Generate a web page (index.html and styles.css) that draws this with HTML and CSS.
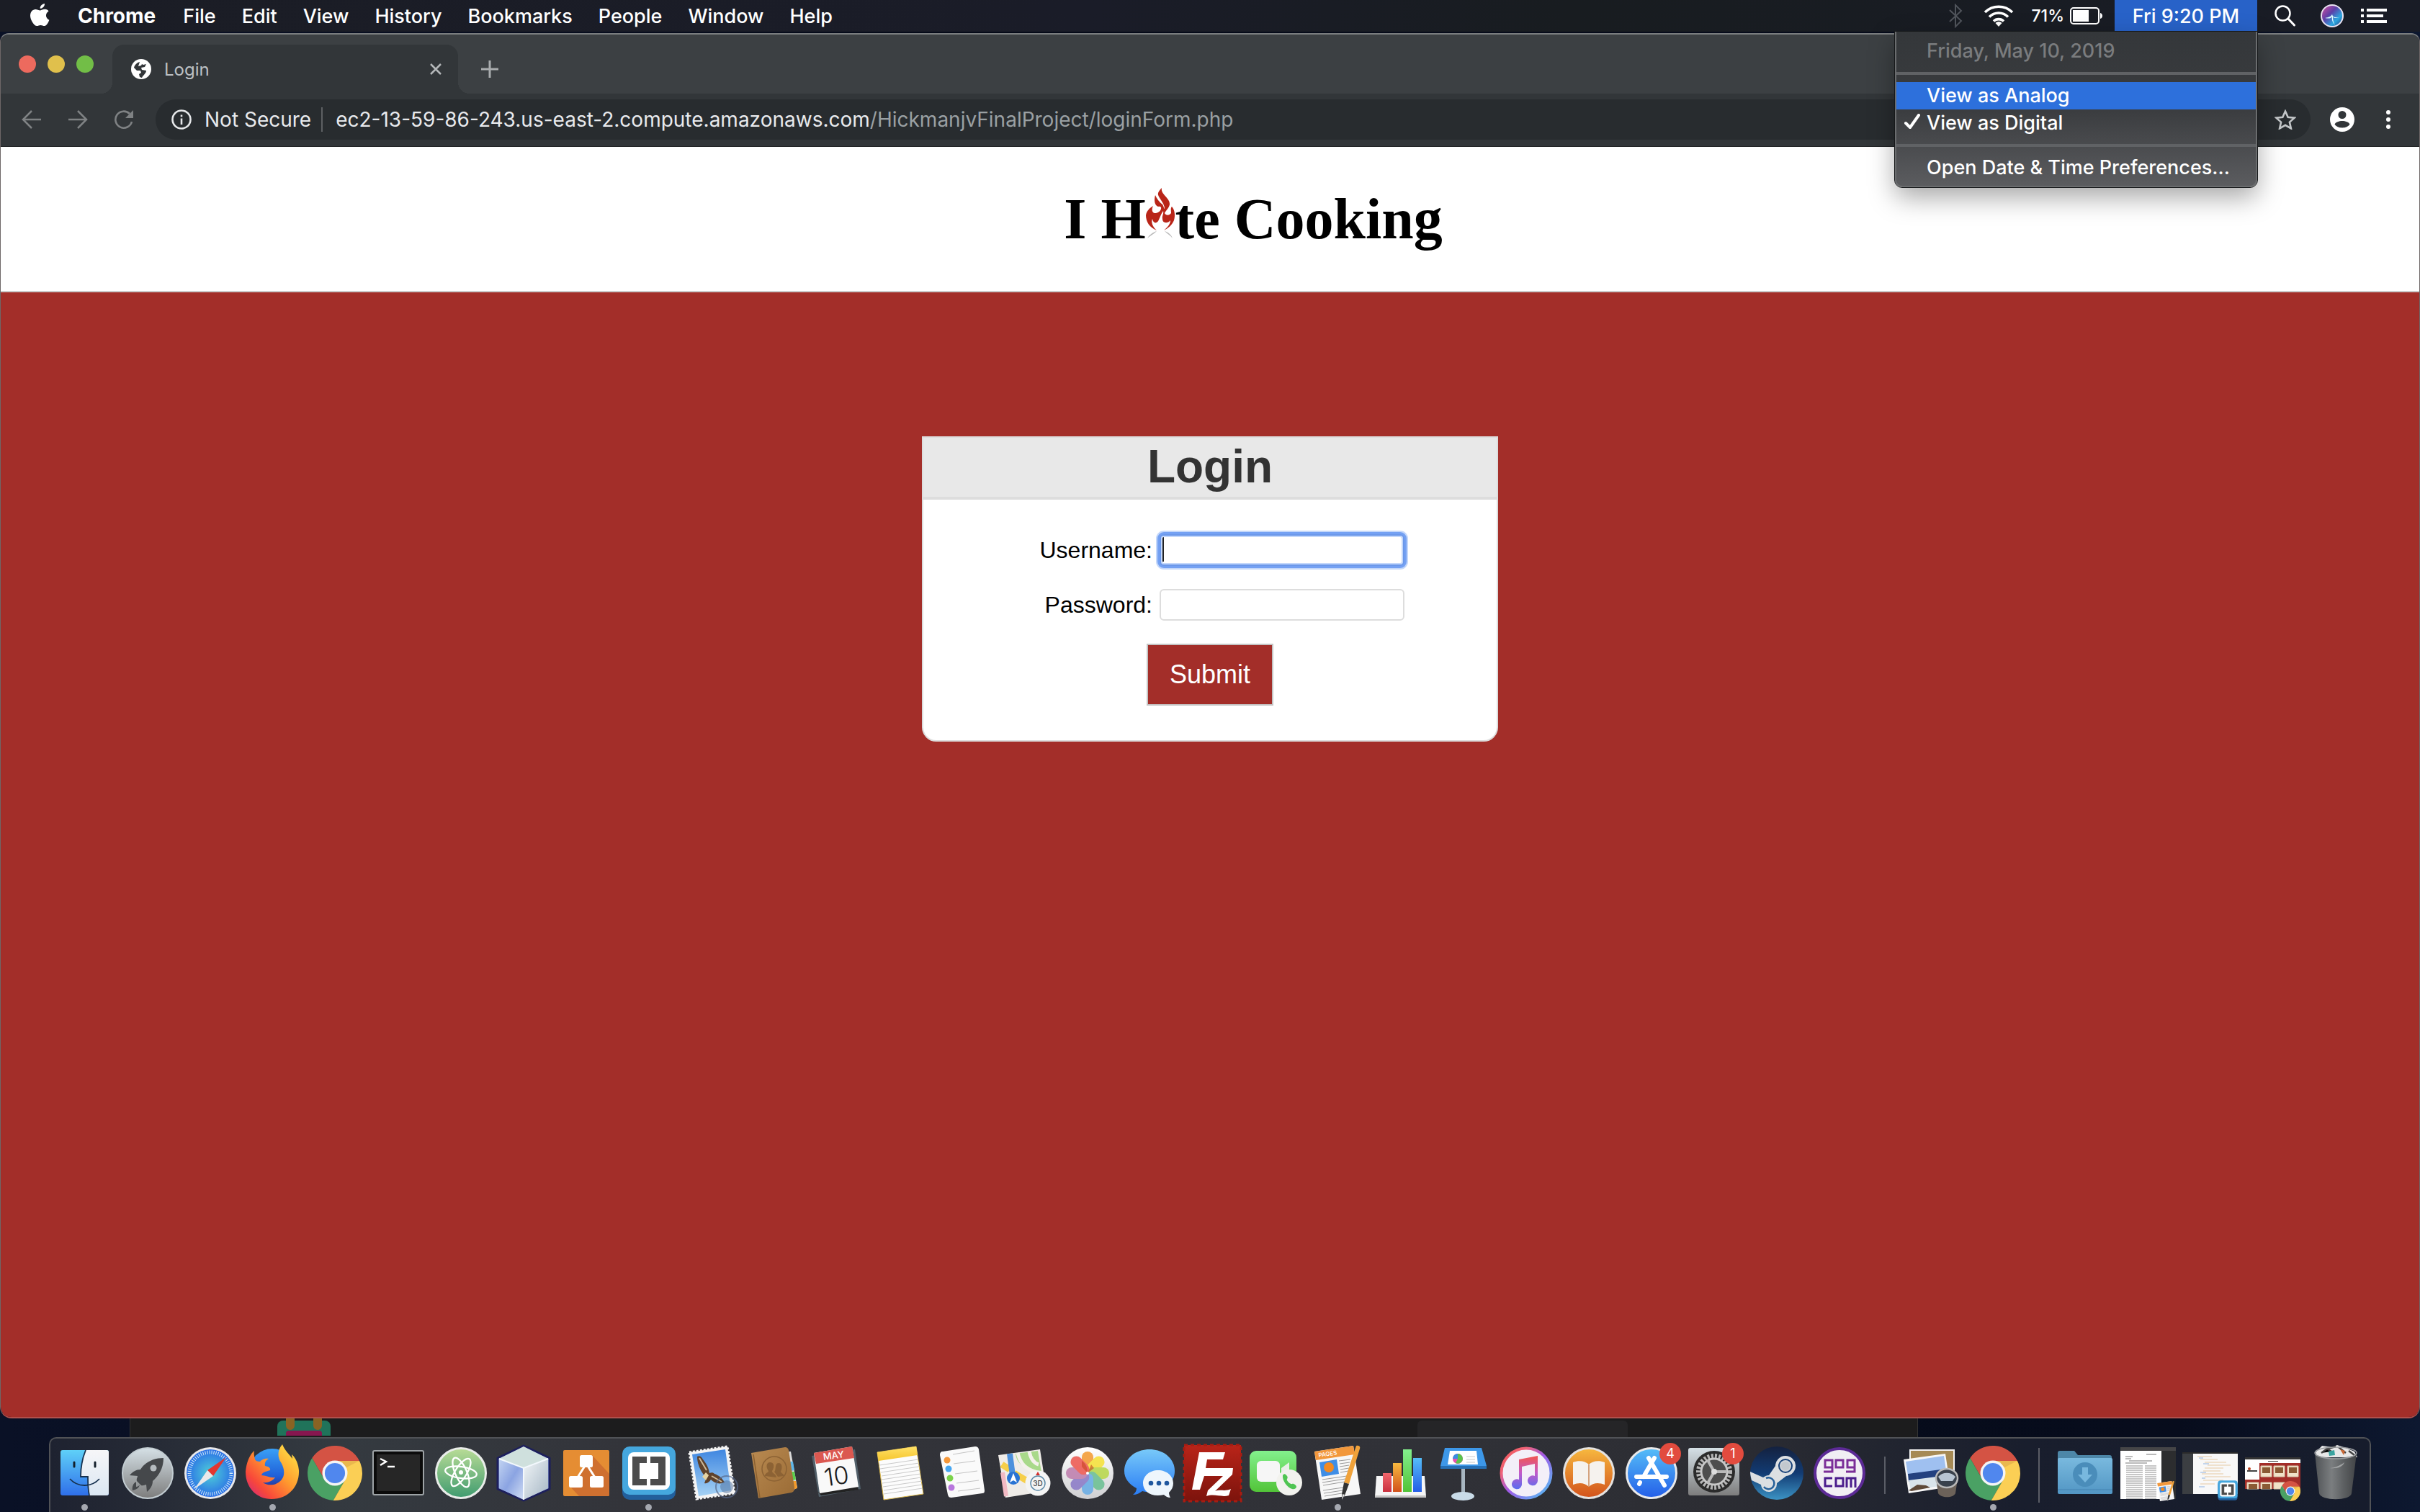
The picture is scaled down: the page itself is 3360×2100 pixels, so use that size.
FILE: index.html
```html
<!DOCTYPE html>
<html lang="en">
<head>
<meta charset="utf-8">
<title>Login</title>
<link rel="stylesheet" href="styles.css">
</head>
<body class="desktop">

<svg class="defs" width="0" height="0" aria-hidden="true">
  <defs>
    <linearGradient id="g-silver" x1="0" y1="0" x2="0" y2="1"><stop offset="0" stop-color="#d5e0e6"/><stop offset="1" stop-color="#7d7d7d"/></linearGradient>
    <linearGradient id="g-white" x1="0" y1="0" x2="0" y2="1"><stop offset="0" stop-color="#fff"/><stop offset="1" stop-color="#cfcfd2"/></linearGradient>
    <linearGradient id="g-finder" x1="0" y1="0" x2="0" y2="1"><stop offset="0" stop-color="#5fd0f8"/><stop offset="1" stop-color="#2f6fea"/></linearGradient>
    <linearGradient id="g-face" x1="0" y1="0" x2="0" y2="1"><stop offset="0" stop-color="#f6f6f8"/><stop offset="1" stop-color="#dbe7f3"/></linearGradient>
    <radialGradient id="g-safari"><stop offset="0" stop-color="#4fd0d8"/><stop offset="1" stop-color="#2a6fe6"/></radialGradient>
    <linearGradient id="g-fox" x1="1" y1="0" x2="0" y2="1"><stop offset="0" stop-color="#fff04a"/><stop offset=".45" stop-color="#ff9a2e"/><stop offset=".75" stop-color="#f8483a"/><stop offset="1" stop-color="#c81f8c"/></linearGradient>
    <linearGradient id="g-foxball" x1="0" y1="0" x2="0" y2="1"><stop offset="0" stop-color="#3aa0f6"/><stop offset=".6" stop-color="#1f5fd8"/><stop offset="1" stop-color="#2a1a6a"/></linearGradient>
    <linearGradient id="g-atom" x1="0" y1="0" x2="0" y2="1"><stop offset="0" stop-color="#b9dc96"/><stop offset="1" stop-color="#3f9b6f"/></linearGradient>
    <linearGradient id="g-cubeL" x1="0" y1="0" x2="1" y2="1"><stop offset="0" stop-color="#c3d4f2"/><stop offset=".5" stop-color="#8ba4e2"/><stop offset="1" stop-color="#d3dff4"/></linearGradient>
    <linearGradient id="g-cubeR" x1="0" y1="0" x2="1" y2="1"><stop offset="0" stop-color="#f2f6f8"/><stop offset="1" stop-color="#a5b6c4"/></linearGradient>
    <linearGradient id="g-sky" x1="0" y1="0" x2="0" y2="1"><stop offset="0" stop-color="#3f86e0"/><stop offset="1" stop-color="#a5d2f5"/></linearGradient>
    <linearGradient id="g-book" x1="0" y1="0" x2="1" y2="1"><stop offset="0" stop-color="#b98a51"/><stop offset="1" stop-color="#9a6b35"/></linearGradient>
    <linearGradient id="g-yellow" x1="0" y1="0" x2="0" y2="1"><stop offset="0" stop-color="#ffe168"/><stop offset="1" stop-color="#f5c52c"/></linearGradient>
    <linearGradient id="g-msg" x1="0" y1="0" x2="0" y2="1"><stop offset="0" stop-color="#78c9f9"/><stop offset="1" stop-color="#2a7df5"/></linearGradient>
    <linearGradient id="g-fz" x1="0" y1="0" x2="0" y2="1"><stop offset="0" stop-color="#b92419"/><stop offset="1" stop-color="#7c130c"/></linearGradient>
    <linearGradient id="g-green" x1="0" y1="0" x2="0" y2="1"><stop offset="0" stop-color="#83f08d"/><stop offset="1" stop-color="#52c438"/></linearGradient>
    <linearGradient id="g-orange" x1="0" y1="0" x2="0" y2="1"><stop offset="0" stop-color="#f7b93f"/><stop offset="1" stop-color="#d2521b"/></linearGradient>
    <linearGradient id="g-red" x1="0" y1="0" x2="0" y2="1"><stop offset="0" stop-color="#f2666c"/><stop offset="1" stop-color="#c9313e"/></linearGradient>
    <linearGradient id="g-blue" x1="0" y1="0" x2="0" y2="1"><stop offset="0" stop-color="#55bdf8"/><stop offset="1" stop-color="#245ee8"/></linearGradient>
    <linearGradient id="g-itunes" x1="0" y1="0" x2="1" y2="1"><stop offset="0" stop-color="#f2554e"/><stop offset=".25" stop-color="#f0647a"/><stop offset=".5" stop-color="#a05ae8"/><stop offset="1" stop-color="#4cc8f5"/></linearGradient>
    <linearGradient id="g-note" x1="0" y1="0" x2="0" y2="1"><stop offset="0" stop-color="#f2554e"/><stop offset=".5" stop-color="#c45ac8"/><stop offset="1" stop-color="#5a6cf0"/></linearGradient>
    <linearGradient id="g-steam" x1="0" y1="0" x2="0" y2="1"><stop offset="0" stop-color="#14213f"/><stop offset=".5" stop-color="#123b73"/><stop offset="1" stop-color="#3c93c4"/></linearGradient>
    <linearGradient id="g-folder" x1="0" y1="0" x2="0" y2="1"><stop offset="0" stop-color="#79b9de"/><stop offset="1" stop-color="#5296c4"/></linearGradient>
    <linearGradient id="g-trash" x1="0" y1="0" x2="1" y2="0"><stop offset="0" stop-color="#505356"/><stop offset=".4" stop-color="#7b7e80"/><stop offset=".7" stop-color="#5c5f61"/><stop offset="1" stop-color="#424446"/></linearGradient>
    <linearGradient id="g-siri" x1="0" y1="0" x2="1" y2="1"><stop offset="0" stop-color="#e0529c"/><stop offset=".4" stop-color="#5e3fa8"/><stop offset=".7" stop-color="#2aa7e0"/><stop offset="1" stop-color="#2b2b6a"/></linearGradient>
    <pattern id="p-lines" width="40" height="3" patternUnits="userSpaceOnUse"><path d="M0 1h37" stroke="#8e8e8e" stroke-width="1"/></pattern>

    <symbol id="s-chrome" viewBox="0 0 100 100">
      <g transform="rotate(240 50 50)"><path d="M50 27.6H94.7A50 50 0 0 1 47 99.9L69.4 61.2Z" fill="#d45344"/></g>
      <g transform="rotate(120 50 50)"><path d="M50 27.6H94.7A50 50 0 0 1 47 99.9L69.4 61.2Z" fill="#4aa164"/></g>
      <path d="M50 27.6H94.7A50 50 0 0 1 47 99.9L69.4 61.2Z" fill="#fbcf55"/>
      <path d="M50 27.6H94.7L72 39Z" fill="#e0a94a" opacity=".6"/>
      <circle cx="50" cy="50" r="23" fill="#f5f5f5"/><circle cx="50" cy="50" r="18.5" fill="#5087ee"/>
    </symbol>
    <symbol id="s-brackets" viewBox="0 0 76 76">
      <rect x="1" y="6" width="74" height="69" rx="10" fill="#225f9c"/>
      <rect x="1" y="1" width="74" height="67" rx="10" fill="#45a7de"/>
      <rect x="9" y="9" width="58" height="52" rx="8" fill="#fff"/>
      <path d="M15 15h20v9H25v22h10v9H15zM61 15H40v9h11v22H40v9h21z" fill="#4c4c4c"/>
    </symbol>
    <symbol id="s-pages" viewBox="0 0 70 78">
      <path d="M2 11 56 3l10 67-54 8z" fill="#f7f7f7"/><path d="M2 11 56 3l2 12-54 8z" fill="#f2983c"/>
      <path d="M9 26 33 22l3 20-24 4z" fill="#3f8ee6"/><circle cx="22" cy="33" r="7" fill="#f28a22"/>
      <g stroke="#9a9a9a" stroke-width="1"><path d="M36 24l16-2M37 28l14-2M37 32l13-2M38 36l12-2M38 40l11-2M13 50l34-5M13 54l32-5M14 58l30-5M14 65l28-4M15 69l26-4M16 73l24-4"/></g>
      <path d="M60 3c4-1 6 1 5 4L50 56l-7-2z" fill="#f0a23a"/><path d="M43 54l7 2-6 16-4 6 0-8z" fill="#333"/><path d="M41 70l3 1-4 7z" fill="#e8e8e8"/>
    </symbol>
  </defs>
</svg>

<header class="menubar">
  <nav class="menubar-apps" aria-label="Application menu">
    <button class="menu-title" aria-label="Apple menu"><svg width="30" height="34" viewBox="0 0 30 34"><path d="M20 0c.3 3.600-3 7-6.300 6.800C13.300 3.500 16.600.4 20 0zM14 9.400c1.400 0 3.600-1.700 6.500-1.600 2.200.1 4 1.100 5 2.700-5.300 3.300-4.300 10 .9 12.200-1.200 3.500-4 8.400-6.800 8.400-2 0-2.900-1.200-5.200-1.200s-3.300 1.200-5.200 1.200C5.300 31.100 0 22.700 0 16.800c0-5.700 3.600-8.800 7.200-8.900 2.500 0 4.600 1.500 6.800 1.500z" fill="#fff"/></svg></button>
    <button class="menu-title menu-title-app">Chrome</button>
    <button class="menu-title">File</button>
    <button class="menu-title">Edit</button>
    <button class="menu-title">View</button>
    <button class="menu-title">History</button>
    <button class="menu-title">Bookmarks</button>
    <button class="menu-title">People</button>
    <button class="menu-title">Window</button>
    <button class="menu-title">Help</button>
  </nav>
  <div class="menubar-status">
    <svg width="24" height="34" viewBox="0 0 24 34" aria-label="Bluetooth off"><path d="M1 9l16 15-8 8V2l8 8L1 25" fill="none" stroke="#50545b" stroke-width="2"/></svg>
    <svg width="42" height="30" viewBox="0 0 42 30" aria-label="Wi-Fi"><path d="M2 10a27 27 0 0 1 38 0M8 16.500a18 18 0 0 1 26 0M14 22.500a10 10 0 0 1 14 0" fill="none" stroke="#fff" stroke-width="3.600"/><path d="M21 30l-4.500-5a6 6 0 0 1 9 0z" fill="#fff"/></svg>
    <div class="battery"><span>71%</span><svg width="46" height="24" viewBox="0 0 46 24" aria-hidden="true"><rect x="1" y="1" width="39" height="22" rx="4" fill="none" stroke="#fff" stroke-width="2"/><rect x="4" y="4" width="22" height="16" fill="#fff"/><path d="M42 8c4 1 4 7 0 8z" fill="#fff"/></svg></div>
    <div class="clock">
      <button class="clock-button" aria-expanded="true">Fri 9:20 PM</button>
      <div class="clock-menu" role="menu">
        <p class="clock-date">Friday, May 10, 2019</p>
        <hr class="clock-rule">
        <button class="clock-item is-active" role="menuitem">View as Analog</button>
        <button class="clock-item" role="menuitem"><svg class="tick" width="22" height="22" viewBox="0 0 22 22" aria-hidden="true"><path d="M2 13l6 6L20 2" fill="none" stroke="#fff" stroke-width="4" stroke-linecap="round" stroke-linejoin="round"/></svg>View as Digital</button>
        <hr class="clock-rule">
        <button class="clock-item" role="menuitem">Open Date &amp; Time Preferences...</button>
      </div>
    </div>
    <div class="menubar-tools">
      <svg width="40" height="30" viewBox="0 0 40 30" aria-label="Search"><circle cx="11.500" cy="11.500" r="10" fill="none" stroke="#fff" stroke-width="2.500"/><path d="M19 19l8.500 9" stroke="#fff" stroke-width="3" stroke-linecap="round"/></svg>
      <svg width="32" height="32" viewBox="0 0 32 32" aria-label="Siri"><circle cx="16" cy="16" r="15" fill="url(#g-siri)" stroke="#e8e2f2" stroke-width="2"/><path d="M6 19c6-1 8-2 10-5 1 4 4 5 10 4-6 2-8 1-9-1 0 5 1 8 3 12-3-4-5-7-4-12-2 3-5 3-10 2z" fill="#d8fbff"/></svg>
      <svg width="36" height="20" viewBox="0 0 36 20" aria-label="Notification Center"><path d="M0 0h4v4H0zM8 0h28v4H8zM0 8h4v4H0zM8 8h23v4H8zM0 16h4v4H0zM8 16h28v4H8z" fill="#fff"/></svg>
    </div>
  </div>
</header>

<main class="browser">
  <div class="tabstrip">
    <div class="lights">
      <button class="light light-close" aria-label="Close"></button>
      <button class="light light-min" aria-label="Minimize"></button>
      <button class="light light-zoom" aria-label="Zoom"></button>
    </div>
    <div class="tab">
      <svg width="28" height="28" viewBox="0 0 28 28" aria-hidden="true"><circle cx="14" cy="14" r="14" fill="#fff"/><path d="M12 4c-4 1-7 4-8 8l4 4h5l1 3-3 2 1 4 3 1c2-4 6-6 6-10l-6-1-1-3 5-1 2-4-4 1-2-1-1 2-4 1 1-3z" fill="#323639"/></svg>
      <span class="tab-title">Login</span>
      <button class="icon-button" aria-label="Close tab"><svg width="18" height="18" viewBox="0 0 18 18"><path d="M2 2l14 14M16 2L2 16" stroke="#b4b7b9" stroke-width="2.500"/></svg></button>
    </div>
    <button class="icon-button new-tab" aria-label="New tab"><svg width="24" height="24" viewBox="0 0 24 24"><path d="M12 0v24M0 12h24" stroke="#a9acae" stroke-width="3"/></svg></button>
  </div>

  <div class="toolbar">
    <button class="icon-button tool" aria-label="Back"><svg width="28" height="28" viewBox="0 0 28 28"><path d="M27 14H3M14 2L2 14l12 12" fill="none" stroke="#7f8284" stroke-width="2.500"/></svg></button>
    <button class="icon-button tool" aria-label="Forward"><svg width="28" height="28" viewBox="0 0 28 28"><path d="M1 14h24M14 2l12 12-12 12" fill="none" stroke="#7f8284" stroke-width="2.500"/></svg></button>
    <button class="icon-button tool" aria-label="Reload"><svg width="28" height="28" viewBox="0 0 28 28"><path d="M22 6A11.500 11.500 0 1 0 25 17" fill="none" stroke="#7f8284" stroke-width="2.600"/><path d="M27 1v11H16z" fill="#7f8284"/></svg></button>
    <div class="omnibox">
      <svg width="28" height="28" viewBox="0 0 28 28" aria-hidden="true"><circle cx="14" cy="14" r="12.500" fill="none" stroke="#e6e8ea" stroke-width="2.600"/><path d="M12.700 12.500h2.600V21h-2.600zM12.700 7.500h2.600v2.700h-2.600z" fill="#e6e8ea"/></svg>
      <span class="omnibox-state">Not Secure</span>
      <span class="omnibox-url">ec2-13-59-86-243.us-east-2.compute.amazonaws.com<span class="omnibox-path">/HickmanjvFinalProject/loginForm.php</span></span>
      <button class="icon-button" aria-label="Bookmark this tab"><svg width="30" height="28" viewBox="0 0 30 28"><path d="M15 2.500l3.700 8.200 9 .9-6.800 6 2 8.800L15 21.800l-7.900 4.600 2-8.800-6.800-6 9-.9z" fill="none" stroke="#c3c6c8" stroke-width="2.600"/></svg></button>
    </div>
    <button class="icon-button tool" aria-label="Profile"><svg width="34" height="34" viewBox="0 0 34 34"><circle cx="17" cy="17" r="17" fill="#fff"/><circle cx="17" cy="10.500" r="5.500" fill="#323639"/><path d="M6.500 23.500c3-6 18-6 21 0-4 6.600-17 6.600-21 0z" fill="#323639"/></svg></button>
    <button class="icon-button tool" aria-label="Menu"><svg width="6" height="26" viewBox="0 0 6 26"><circle cx="3" cy="3" r="3" fill="#fff"/><circle cx="3" cy="13" r="3" fill="#fff"/><circle cx="3" cy="23" r="3" fill="#fff"/></svg></button>
  </div>

  <div class="site">
    <div class="site-header">
      <h1 class="site-title">I H<svg width="41" height="70" viewBox="0 0 41 70" role="img" aria-label="a"><path d="M22 0C20 9 34 14 33 23C32 28 28 31 26 35C28 39 33 38 35 35C35 31 34 28 36 26C40 30 41 38 39 45C36 52 31 56 25 59C32 53 34 49 34 45C30 50 23 49 23 43C22 39 25 36 24 32C21 36 20 40 18 44C16 50 10 50 9 43C7 47 9 54 15 59C5 55 0 47 0 38C1 32 5 28 10 25C8 29 8 34 12 35C16 35 20 33 21 29C22 26 19 25 17 26C12 24 11 17 13 10C15 15 19 20 23 23C25 26 25 29 26 29C26 20 15 12 17 7C18 4 20 2 22 0Z" fill="#b92518"/><path d="M15 60C9 62 5 65 2 70c3-3 8-5 13-10zM26 60c6 2 9 5 11 10-3-4-7-6-11-10z" fill="#b9b9b9"/></svg>te Cooking</h1>
    </div>
    <form class="login-card">
      <h2 class="login-title">Login</h2>
      <div class="login-body">
        <div class="login-row">
          <label for="username">Username:</label>
          <input class="login-input is-focused" id="username" name="username" type="text">
        </div>
        <div class="login-row">
          <label for="password">Password:</label>
          <input class="login-input" id="password" name="password" type="password">
        </div>
        <button class="login-submit" type="button">Submit</button>
      </div>
    </form>
  </div>
</main>

<footer class="dock-area">
  <div class="rear-window" aria-hidden="true">
    <svg width="74" height="24" viewBox="0 0 74 24"><rect y="3" width="74" height="40" rx="8" fill="#20735a"/><path d="M12 0h12v10a6 6 0 0 1-12 0zM50 0h12v10a6 6 0 0 1-12 0z" fill="#8a6323"/><rect x="12" y="17" width="50" height="12" rx="4" fill="#86174f"/></svg>
    <div class="rear-panel"></div>
  </div>
  <ul class="dock">
    <li class="dock-item is-running"><svg class="dock-icon" viewBox="0 0 87 100"><rect x="10" y="15" width="67" height="63" rx="3" fill="url(#g-finder)"/><path d="M45 15h29a3 3 0 0 1 3 3v57a3 3 0 0 1-3 3H50c-2-9-2-16-2-26H38c0-12 2-25 7-37z" fill="url(#g-face)"/><path d="M45 15c-5 12-7 25-7 37h10c0 10 0 17 2 26M23 55c11 12 30 12 41 0" fill="none" stroke="#16314f" stroke-width="1.800"/><path d="M29 32v6M58 32v6" stroke="#14202c" stroke-width="3" stroke-linecap="round"/></svg></li>
    <li class="dock-item"><svg class="dock-icon" viewBox="0 0 87 100"><circle cx="44" cy="47" r="35" fill="url(#g-silver)" stroke="#c3cdd2" stroke-width="2"/><path d="M66 26c-14 0-26 6-32 16-6 0-11 3-15 8l11 1c0 2-2 4-1 7l6 6c3 1 5-1 7-1l1 10c5-4 8-9 8-15 8-7 15-17 15-32z" fill="#45484b"/><circle cx="52" cy="40" r="4.500" fill="#b5bbbf"/><path d="M28 59c-4 2-6 7-5 12 5-1 9-3 10-8-1 2-3 3-5 3 0-3 0-5 0-7z" fill="#45484b"/></svg></li>
    <li class="dock-item"><svg class="dock-icon" viewBox="0 0 87 100"><circle cx="44" cy="47" r="36" fill="#e8e8ea"/><circle cx="44" cy="47" r="33" fill="url(#g-safari)"/><circle cx="44" cy="47" r="29" fill="none" stroke="#d5ecfa" stroke-width="5" stroke-dasharray="1 2"/><path d="M66 25L48 51l-8-8z" fill="#e3362f"/><path d="M22 69l18-26 8 8z" fill="#e9e9e9"/></svg></li>
    <li class="dock-item is-running"><svg class="dock-icon" viewBox="0 0 87 100"><circle cx="43" cy="45" r="32" fill="url(#g-foxball)"/><path d="M57 7c-8 9-6 19-2 25 5 8 6 18 1 24-7 9-19 9-26 4 8 1 14-3 17-7-7 1-13-3-19-3 1-4 5-5 12-7 1-4-3-5-7-6-1-4 1-8 5-10-6-1-10 2-12 4-4 0-6-1-7-3-1-5-2-8-1-12-6 5-11 16-12 29 0 22 15 38 36 38 24 0 39-18 38-40-1-9-4-17-10-22l1 6C66 20 60 15 57 7z" fill="url(#g-fox)"/></svg></li>
    <li class="dock-item"><svg class="dock-icon" viewBox="0 0 87 100"><use href="#s-chrome" x="5" y="9" width="76" height="76"/></svg></li>
    <li class="dock-item"><svg class="dock-icon" viewBox="0 0 87 100"><rect x="9" y="16" width="70" height="61" rx="2" fill="#0b0b0b" stroke="#9da3a6" stroke-width="2"/><rect x="14" y="21" width="60" height="51" fill="#262626"/><path d="M19 27l8 4-8 5M29 38h10" fill="none" stroke="#fff" stroke-width="2.500"/></svg></li>
    <li class="dock-item"><svg class="dock-icon" viewBox="0 0 87 100"><circle cx="44" cy="47" r="34.500" fill="url(#g-atom)" stroke="#e9ece9" stroke-width="3"/><g fill="none" stroke="#fff" stroke-width="2.300"><ellipse cx="44" cy="46" rx="22" ry="8" transform="rotate(8 44 46)"/><ellipse cx="44" cy="46" rx="22" ry="8" transform="rotate(66 44 46)"/><ellipse cx="44" cy="46" rx="22" ry="8" transform="rotate(122 44 46)"/></g><circle cx="44" cy="46" r="3" fill="#fff"/></svg></li>
    <li class="dock-item"><svg class="dock-icon" viewBox="0 0 87 100"><path d="M44 9l36 17v43L44 85 8 69V26z" fill="#8ba4e2" stroke="#1d1f5c" stroke-width="3" stroke-linejoin="round"/><path d="M44 10l34 17-34 13L10 27z" fill="#cfe0dd"/><path d="M10 27l34 13v44L10 68z" fill="url(#g-cubeL)"/><path d="M78 27L44 40v44l34-16z" fill="url(#g-cubeR)"/><path d="M10 27l34 13 34-13M44 40v44" fill="none" stroke="#f3f8fd" stroke-width="2"/></svg></li>
    <li class="dock-item"><svg class="dock-icon" viewBox="0 0 87 100"><rect x="12" y="15" width="64" height="64" rx="2" fill="#e58d33"/><path d="M52 22l24 26v29a2 2 0 0 1-2 2H34L20 64l18-18z" fill="#cf7030"/><path d="M44 34L30 56M44 34l14 22" stroke="#fff" stroke-width="3"/><rect x="35" y="22" width="18" height="17" rx="2.500" fill="#fff"/><rect x="20" y="51" width="19" height="16" rx="2.500" fill="#fff"/><rect x="49" y="51" width="19" height="16" rx="2.500" fill="#fff"/></svg></li>
    <li class="dock-item is-running"><svg class="dock-icon" viewBox="0 0 87 100"><use href="#s-brackets" x="6" y="9" width="76" height="76"/></svg></li>
    <li class="dock-item"><svg class="dock-icon" viewBox="0 0 87 100"><path d="M13 18l53-8 10 65-53 8z" fill="#f4f4f4" stroke="#f4f4f4" stroke-width="3" stroke-dasharray="3 2"/><path d="M17 21l46-7 8 57-45 8z" fill="url(#g-sky)"/><path d="M24 24c3-2 6 0 8 4 5 6 8 12 9 19 3-1 5-1 7 1 6 2 11 6 14 12-7 3-14 1-19-4-2 3-5 6-9 5 1-3 2-5 2-8-7-8-12-18-12-29z" fill="#5e422c"/><path d="M27 26l10 17M44 51l14 8" stroke="#cdb997" stroke-width="2"/><path d="M31 52l5-6 4 4-4 7z" fill="#e6d3a3"/><circle cx="65" cy="66" r="15" fill="none" stroke="#57688a" stroke-width="2" opacity=".7"/><circle cx="65" cy="66" r="9" fill="#4d6d9a" opacity=".5"/></svg></li>
    <li class="dock-item"><svg class="dock-icon" viewBox="0 0 87 100"><path d="M62 17h5l9 50-6 4z" fill="#d9d9d9"/><path d="M65 31l5 0 2 12-5 1z" fill="#5fb6e8"/><path d="M67 45l5 0 2 11-5 1z" fill="#5ccf4d"/><path d="M69 58l5 0 2 10-6 2z" fill="#f39a2a"/><path d="M12 19l47-8c3 0 4 2 5 4l8 52c0 4-1 6-4 7l-46 8z" fill="url(#g-book)"/><path d="M15 21l9 60" stroke="#8b6030" stroke-width="1.500"/><circle cx="44" cy="41" r="17" fill="none" stroke="#8c6234" stroke-width="1.500"/><path d="M31 51c0-5 5-4 5-7-4-5-3-12 2-12 7 0 6 8 3 12 0 4 5 3 6 9zM44 45c3-1 0-12 6-12s5 8 3 12c1 3 5 3 4 6l-8 1z" fill="#8c6234"/></svg></li>
    <li class="dock-item"><svg class="dock-icon" viewBox="0 0 87 100"><path d="M9 23l60-9 8 55-58 11z" fill="#52606a"/><path d="M18 73l54-8 2 5-52 8z" fill="#222"/><path d="M12 19l53-9 9 56-54 9z" fill="#f9f9f9"/><path d="M12 19l53-9 3 16-53 8z" fill="#db5850"/><g font-family="Inter, sans-serif" text-anchor="middle"><text transform="translate(40 27) rotate(-8)" font-size="13" fill="#fff">MAY</text><text transform="translate(45 63) rotate(-8)" font-size="34" font-weight="300" fill="#1c1c1c">10</text></g></svg></li>
    <li class="dock-item"><svg class="dock-icon" viewBox="0 0 87 100"><path d="M13 18l54-8 10 66-55 8z" fill="#fcfcfc" stroke="#d9b64a" stroke-width="1"/><path d="M13 18l54-8 2 12-54 8z" fill="url(#g-yellow)"/><path d="M16 36l54-8M17 41l54-8M18 46l53-8M19 51l53-8M19 56l54-8M20 61l54-8M21 66l54-8M22 71l53-8M22 76l54-8" stroke="#c9c9c9" stroke-width="1"/></svg></li>
    <li class="dock-item"><svg class="dock-icon" viewBox="0 0 87 100"><path d="M17 17l45-7c3 0 4 1 5 4l8 57c0 3-1 4-3 4l-43 6c-3 0-4-1-5-4L13 22c0-3 1-5 4-5z" fill="#fafafa"/><path d="M31 21l30-5M32 34l30-4M34 48l31-4M36 61l31-4M38 72l31-4" stroke="#c4c4c4" stroke-width="1"/><circle cx="23" cy="29" r="4.500" fill="#f6983a"/><circle cx="25" cy="41" r="4.500" fill="#45a6f2"/><circle cx="27" cy="54" r="4.500" fill="#7bd34b"/><circle cx="29" cy="67" r="4.500" fill="#b877dd"/></svg></li>
    <li class="dock-item"><svg class="dock-icon" viewBox="0 0 87 100"><path d="M7 22l58-8 9 58-57 9z" fill="#efece8"/><path d="M31 20l31-4 5 30-14-3c-13-4-21-12-22-23z" fill="#a9d98a"/><path d="M34 19c4 17 14 25 32 28M50 17c2 10 6 16 13 18" stroke="#f4f1ea" stroke-width="5" fill="none"/><path d="M12 35l11 7M29 47l32 19" stroke="#f6cf4a" stroke-width="9"/><path d="M23 20l5 38" stroke="#4b90dc" stroke-width="8"/><path d="M13 46l5 33" stroke="#f2b9c3" stroke-width="6"/><circle cx="28" cy="54" r="9" fill="#2a74d4"/><path d="M28 47l5 13-5-3-5 3z" fill="#fff"/><circle cx="62" cy="61" r="17.500" fill="#f4f4f4"/><circle cx="62" cy="61" r="10" fill="none" stroke="#5c8aa8" stroke-width="1.500"/><path d="M62 45l3 5h-6z" fill="#d2302c"/><text x="62" y="65" font-family="Inter, sans-serif" font-size="10" text-anchor="middle" fill="#444">3D</text></svg></li>
    <li class="dock-item"><svg class="dock-icon" viewBox="0 0 87 100"><circle cx="44" cy="47" r="36" fill="url(#g-white)"/><g opacity=".88"><rect x="36" y="17" width="16" height="30" rx="8" fill="#f49c35"/><rect x="36" y="17" width="16" height="30" rx="8" fill="#f6e23a" transform="rotate(45 44 47)"/><rect x="36" y="17" width="16" height="30" rx="8" fill="#b9d84b" transform="rotate(90 44 47)"/><rect x="36" y="17" width="16" height="30" rx="8" fill="#6cc093" transform="rotate(135 44 47)"/><rect x="36" y="17" width="16" height="30" rx="8" fill="#6aaee6" transform="rotate(180 44 47)"/><rect x="36" y="17" width="16" height="30" rx="8" fill="#8c7cc8" transform="rotate(225 44 47)"/><rect x="36" y="17" width="16" height="30" rx="8" fill="#bf7fae" transform="rotate(270 44 47)"/><rect x="36" y="17" width="16" height="30" rx="8" fill="#ee5a52" transform="rotate(315 44 47)"/></g><path d="M44 47l-8-9v-8c5 3 8 9 8 17l5-12 4 5z" fill="#c8451f" opacity=".6"/><circle cx="44" cy="47" r="2" fill="#fff"/></svg></li>
    <li class="dock-item"><svg class="dock-icon" viewBox="0 0 87 100"><path d="M43 14c20 0 35 13 35 30S63 73 43 73c-4 0-7 0-10-1-4 3-8 5-13 5 4-3 5-6 5-9C14 62 8 54 8 44c0-17 15-30 35-30z" fill="url(#g-msg)"/><path d="M55 43c12 0 21 8 21 18 0 5-2 9-6 13 0 3 1 5 2 7-4 0-7-2-9-4-17 4-29-4-29-16 0-10 9-18 21-18z" fill="#eef6fc"/><circle cx="45" cy="61" r="3.300" fill="#1f579e"/><circle cx="56" cy="61" r="3.300" fill="#1f579e"/><circle cx="67" cy="61" r="3.300" fill="#1f579e"/></svg></li>
    <li class="dock-item"><svg class="dock-icon" viewBox="0 0 87 100"><rect x="4" y="8" width="79" height="78" fill="url(#g-fz)" stroke="#a81c12" stroke-width="3" stroke-dasharray="5 4"/><path d="M25 18h36l-3 10H36l-2 12h38l-1 9-24 23c8-3 13 1 22-3l-3 9c-10 3-20-3-31 1l2-8 21-20H32l-6 19H15z" fill="#fff"/></svg></li>
    <li class="dock-item"><svg class="dock-icon" viewBox="0 0 87 100"><rect x="8" y="16" width="65" height="57" rx="9" fill="url(#g-green)"/><rect x="18" y="30" width="32" height="29" rx="6" fill="#f6f6f6"/><path d="M52 40l11-8v26l-11-7z" fill="#e9efe9"/><circle cx="63" cy="60" r="18" fill="#f2f2ee"/><path d="M54 50c2-3 4-2 6 1s-1 4 0 6 5 6 7 5 6 2 6 4-3 4-6 3c-7-2-14-12-13-19z" fill="#4fc552"/></svg></li>
    <li class="dock-item is-running"><svg class="dock-icon" viewBox="0 0 87 100"><use href="#s-pages" x="9" y="6" width="70" height="78"/><text transform="translate(17 25) rotate(-8)" font-family="Inter, sans-serif" font-size="8" fill="#fff">PAGES</text></svg></li>
    <li class="dock-item"><svg class="dock-icon" viewBox="0 0 87 100"><path d="M10 51h67l2 29H8z" fill="#f5f5f5"/><path d="M8 78h71v3H8z" fill="#c6c6c6"/><rect x="19" y="47" width="12" height="26" fill="url(#g-red)"/><rect x="33" y="33" width="12" height="40" fill="url(#g-orange)"/><rect x="47" y="14" width="12" height="59" fill="url(#g-green)"/><rect x="61" y="26" width="12" height="47" fill="url(#g-blue)"/></svg></li>
    <li class="dock-item"><svg class="dock-icon" viewBox="0 0 87 100"><path d="M41 40h5v40h-5z" fill="#a8b6c1"/><ellipse cx="43" cy="79" rx="16" ry="6" fill="#c9dbe8"/><path d="M18 12h51l7 25v4H12v-4z" fill="#3d97e8"/><path d="M12 37h64v4H12z" fill="#256fb5"/><path d="M25 16h37l2 19H22z" fill="#fff"/><circle cx="36" cy="27" r="7" fill="#e74fb0"/><path d="M36 27v-7a7 7 0 0 1 7 7zM36 27h7a7 7 0 0 1-10 6z" fill="#5ac34b"/><path d="M36 27v-7a7 7 0 0 0-7 7z" fill="#3a8fe0"/><path d="M48 24h12M48 28h12M48 32h12" stroke="#c9c9c9"/></svg></li>
    <li class="dock-item"><svg class="dock-icon" viewBox="0 0 87 100"><circle cx="44" cy="47" r="34.500" fill="#f3eff8" stroke="url(#g-itunes)" stroke-width="4"/><path d="M34 28l26-5v34a7 7 0 1 1-4-6V34l-18 4v24a7 7 0 1 1-4-6z" fill="url(#g-note)"/></svg></li>
    <li class="dock-item"><svg class="dock-icon" viewBox="0 0 87 100"><circle cx="44" cy="47" r="34.500" fill="url(#g-orange)" stroke="#e4e2e0" stroke-width="3"/><path d="M22 32c8-3 17-2 22 3 5-5 14-6 22-3v31c-8-3-16-3-22 3-6-6-14-6-22-3z" fill="#f5f2ee"/><path d="M44 35v31" stroke="#c9895a" stroke-width="1.500"/></svg></li>
    <li class="dock-item"><svg class="dock-icon" viewBox="0 0 87 100"><circle cx="44" cy="47" r="34.500" fill="url(#g-blue)" stroke="#e9e9ea" stroke-width="3"/><g stroke="#fff" stroke-width="6" stroke-linecap="round"><path d="M48 26L33 52M40 26l22 38M23 52h42M27 62l1-2"/></g></svg><span class="badge">4</span></li>
    <li class="dock-item"><svg class="dock-icon" viewBox="0 0 87 100"><rect x="8" y="12" width="71" height="66" rx="3" fill="url(#g-silver)"/><circle cx="44" cy="45" r="29" fill="#2b2b2b"/><circle cx="44" cy="45" r="22" fill="none" stroke="#b5b5b5" stroke-width="6" stroke-dasharray="3 2.200"/><circle cx="44" cy="45" r="18" fill="#4e4e4e" stroke="#c8c8c8" stroke-width="3"/><path d="M44 45h18M44 45l-9 16M44 45l-9-16" stroke="#b9b9b9" stroke-width="4"/><circle cx="44" cy="45" r="4" fill="#ddd"/></svg><span class="badge">1</span></li>
    <li class="dock-item"><svg class="dock-icon" viewBox="0 0 87 100"><circle cx="44" cy="47" r="37" fill="url(#g-steam)"/><path d="M7 45l18 8c3-2 5-3 8-3l9-13a14 14 0 1 1 15 14L44 61a11 11 0 0 1-22 2L9 57c-1-4-2-8-2-12z" fill="#dcdfe2"/><circle cx="56" cy="37" r="10" fill="#18427a"/><circle cx="56" cy="37" r="8" fill="#cfd3d8"/><circle cx="56" cy="37" r="6" fill="#c3c8ce"/><path d="M29 54a8 8 0 1 1-3 12" fill="none" stroke="#27619a" stroke-width="2.500"/></svg></li>
    <li class="dock-item"><svg class="dock-icon" viewBox="0 0 87 100"><circle cx="44" cy="47" r="34" fill="#f1eef4" stroke="#5c2a96" stroke-width="4"/><g fill="none" stroke="#7b2d98" stroke-width="3"><path d="M33 39h-9V29h10v16H22M39 29h10v10H39zM65 39H55V29h10v16H53"/></g><g fill="none" stroke="#4b1d8c" stroke-width="3"><path d="M34 54H24v11h10M39 54h10v11H39zM54 67V54h12v13M60 54v13"/></g></svg></li>
    <li class="dock-rule dock-rule-short" aria-hidden="true"></li>
    <li class="dock-item"><svg class="dock-icon" viewBox="0 0 87 100"><path d="M15 15h61v45H15z" fill="#a68a55" stroke="#f2f2f2" stroke-width="2"/><path d="M6 28l58-8 7 46-58 9z" fill="#f7f7f7"/><path d="M9 31l53-8 3 20-53 7z" fill="#9fc0f0"/><path d="M12 48l53-7 2 11-54 7z" fill="#23417f"/><path d="M13 57l54-7 2 13-53 8z" fill="#d9e4ea"/><path d="M13 71l12-8 12 1 6 3-26 5z" fill="#5f4a38"/><path d="M51 55h30l-3 20c-3 7-20 7-24 0z" fill="#6c6259"/><ellipse cx="66" cy="54" rx="15" ry="13" fill="#39414c" stroke="#b9b9b9" stroke-width="2.500"/><path d="M54 52c6-7 18-7 24 0l-4 6H58z" fill="#b7c4d2"/></svg></li>
    <li class="dock-item is-running"><svg class="dock-icon" viewBox="0 0 87 100"><use href="#s-chrome" x="5" y="9" width="76" height="76"/></svg></li>
    <li class="dock-rule" aria-hidden="true"></li>
    <li class="dock-item"><svg class="dock-icon" viewBox="0 0 87 100"><path d="M6 19c0-2 1-3 3-3h20l5 6h44c2 0 3 1 3 3v8H6z" fill="#4d87a8"/><rect x="6" y="26" width="76" height="50" rx="2" fill="url(#g-folder)"/><path d="M6 70h76" stroke="#4583b0" stroke-width="1"/><circle cx="44" cy="49" r="17" fill="#4a8dba"/><path d="M40 39h8v10h6L44 60 34 49h6z" fill="#78b8de"/></svg></li>
    <li class="dock-item"><svg class="dock-icon" viewBox="0 0 87 100"><path d="M6 11h77v72H6z" fill="#2c2d2f"/><path d="M6 11h77v5H6z" fill="#454547"/><path d="M6 16h57v67H6z" fill="#fff"/><path d="M14 36h42v47H14z" fill="url(#p-lines)"/><path d="M42 21h14M13 24h10M13 27h8M18 30h32M13 33h30" stroke="#777"/><use href="#s-pages" x="56" y="57" width="27" height="29"/></svg></li>
    <li class="dock-item"><svg class="dock-icon" viewBox="0 0 87 100"><path d="M5 18h77v58H5z" fill="#f8f8f8"/><path d="M5 18h15v58H5z" fill="#3b3e42"/><path d="M5 18h77v2H5z" fill="#2b2b2b"/><path d="M26 24h20M30 28h24M36 32h30M40 36h32M36 40h26M34 44h24M32 48h30M36 52h36M34 57h28M30 62h20" stroke="#e6c9a2"/><path d="M28 26h6M34 34h8M30 46h8M32 54h5M28 66h8" stroke="#8fb2e0"/><use href="#s-brackets" x="54" y="57" width="28" height="28"/></svg></li>
    <li class="dock-item"><svg class="dock-icon" viewBox="0 0 87 100"><path d="M5 25h77v44H5z" fill="#a32e29"/><path d="M5 25h77v3H5z" fill="#333"/><path d="M5 28h77v5H5zM5 33h20v23H5z" fill="#fff"/><path d="M37 30.500h14" stroke="#444"/><path d="M8 44h14" stroke="#444" stroke-width="2"/><circle cx="11" cy="41" r="2" fill="#b42"/><g fill="#f0e2c8" stroke="#d8c8ae"><path d="M27 37h15v15H27zM45 37h15v15H45zM64 37h15v15H64zM8 60h16v9H8zM27 60h15v9H27zM45 60h15v9H45z"/></g><path d="M29 39h11v8H29zM47 39h11v8H47zM66 39h11v8H66zM10 62h12v7H10zM29 62h11v7H29z" fill="#8a5a34"/><use href="#s-chrome" x="54" y="58" width="28" height="28"/></svg></li>
    <li class="dock-item"><svg class="dock-icon" viewBox="0 0 87 100"><path d="M16 18l9-9 14 2 7-3 12 4 12 5 4 8H18z" fill="#e8e8e8"/><path d="M24 19l8-6 6 4M48 11l10 8M30 14l14-4M62 16l8 6" stroke="#444" stroke-width="2.500"/><path d="M34 17l8-2 1 7-8 1z" fill="#3aa3a0"/><path d="M50 14l7 2-2 6z" fill="#c96a38"/><path d="M15 19c1 9 57 9 58 0l-7 56c-1 11-43 11-45 0z" fill="url(#g-trash)"/><ellipse cx="44" cy="19" rx="29" ry="8" fill="none" stroke="#9a9da0" stroke-width="1.500"/><path d="M36 40c8 0 16-5 20-8-2 6-9 9-20 8z" fill="#c9cbcc" opacity=".6"/></svg></li>
  </ul>
</footer>
</body>
</html>
```

FILE: styles.css
```css
*,
*::before,
*::after {
  box-sizing: border-box;
}

html,
body {
  margin: 0;
}

button {
  margin: 0;
  padding: 0;
  border: 0;
  background: none;
  color: inherit;
  font: inherit;
}

svg {
  display: block;
  flex: none;
}

.defs {
  position: absolute;
}

.desktop {
  display: flex;
  flex-direction: column;
  min-height: 100vh;
  background: linear-gradient(90deg, #0a1126, #050a18 40%, #070c1c 90%, #0d1830);
  color: #fff;
  font-family: Inter, "Liberation Sans", sans-serif;
  font-size: 27px;
  font-weight: 500;
}

/* Menu bar */

.menubar {
  display: flex;
  justify-content: space-between;
  height: 44px;
  margin-bottom: 2px;
  background: linear-gradient(90deg, #1b1d25, #1a1c28 45%, #181c20 65%, #191c26);
}

.menubar-apps,
.menubar-status,
.menubar-tools,
.battery {
  display: flex;
  align-items: center;
}

.menubar-apps {
  padding-left: 24px;
}

.menu-title {
  padding: 0 18px;
}

.menu-title-app {
  padding-right: 20px;
  font-size: 28px;
  font-weight: 700;
}

.menubar-status {
  gap: 24px;
}

.battery {
  gap: 8px;
  margin-right: -8px;
  font-size: 23px;
}

.clock {
  position: relative;
  align-self: stretch;
}

.clock-button {
  width: 198px;
  height: 44px;
  background: #2862c8;
}

.clock-menu {
  position: absolute;
  z-index: 2;
  top: 44px;
  right: 0;
  width: 503px;
  padding-bottom: 6px;
  border: 2px solid #6a6c6e;
  border-top: 0;
  border-radius: 0 0 10px 10px;
  outline: 1px solid #17191b;
  background: linear-gradient(#34373a, #3a3c3f 50%, #5b5c5f);
  box-shadow: 0 14px 36px rgba(0, 0, 0, 0.35);
}

.clock-date {
  margin: 0;
  padding: 8px 42px 10px;
  color: #7a7c7e;
  line-height: 38px;
}

.clock-rule {
  height: 4px;
  margin: 0 0 10px;
  border: 0;
  background: #606265;
}

.clock-item {
  position: relative;
  display: block;
  width: 100%;
  padding: 0 20px 0 42px;
  line-height: 38px;
  text-align: left;
  white-space: nowrap;
}

.clock-item + .clock-rule {
  margin-top: 10px;
}

.clock-item.is-active {
  background: #2d70dc;
}

.tick {
  position: absolute;
  top: 6px;
  left: 11px;
}

.menubar-tools {
  gap: 24px;
  padding-right: 46px;
}

/* Browser window */

.browser {
  display: flex;
  flex: 1;
  flex-direction: column;
  overflow: hidden;
  border: 1px solid #6e6767;
  border-top: 2px solid #7a7d7f;
  border-bottom: 2px solid #b0504c;
  border-radius: 12px 12px 16px 16px;
}

.tabstrip {
  display: flex;
  align-items: flex-end;
  height: 82px;
  background: #3c4043;
}

.lights {
  display: flex;
  gap: 16px;
  align-self: center;
  width: 155px;
  padding-left: 25px;
}

.light {
  width: 24px;
  height: 24px;
  border-radius: 50%;
}

.light-close {
  background: #ed6a5e;
}

.light-min {
  background: #e0c04c;
}

.light-zoom {
  background: #72be47;
}

.tab {
  position: relative;
  display: flex;
  align-items: center;
  gap: 18px;
  width: 480px;
  height: 68px;
  padding: 0 22px 0 26px;
  border-radius: 16px 16px 0 0;
  background: #323639;
  color: #bdc1c4;
  font-size: 24px;
  font-weight: 400;
}

.tab::before,
.tab::after {
  position: absolute;
  bottom: 0;
  width: 16px;
  height: 16px;
  content: "";
}

.tab::before {
  right: 100%;
  background: radial-gradient(circle at 0 0, #3c4043 16px, #323639 16px);
}

.tab::after {
  left: 100%;
  background: radial-gradient(circle at 100% 0, #3c4043 16px, #323639 16px);
}

.tab-title {
  flex: 1;
}

.icon-button {
  display: flex;
  align-items: center;
  justify-content: center;
}

.new-tab {
  width: 88px;
  height: 68px;
}

.toolbar {
  display: flex;
  align-items: center;
  height: 74px;
  padding: 0 11px 2px;
  border-bottom: 1px solid #232527;
  background: #323639;
}

.tool {
  width: 64px;
  height: 56px;
}

.omnibox {
  display: flex;
  flex: 1;
  align-items: center;
  height: 56px;
  margin: 0 12px;
  padding: 0 20px 0 22px;
  border-radius: 28px;
  background: #282c2f;
  color: #e8eaed;
  font-size: 28px;
  font-weight: 400;
}

.omnibox-state {
  margin-left: 18px;
  padding-right: 14px;
  border-right: 2px solid #5d6063;
}

.omnibox-url {
  flex: 1;
  margin-left: 18px;
}

.omnibox-path {
  color: #9aa0a3;
}

/* Page */

.site {
  flex: 1;
  background: #a32e29;
}

.site-header {
  display: flex;
  align-items: center;
  justify-content: center;
  height: 202px;
  padding-left: 120px;
  border-bottom: 2px solid #ccc;
  background: #fff;
}

.site-title {
  display: flex;
  align-items: baseline;
  margin: 0;
  color: #000;
  font: bold 80px "Liberation Serif", serif;
  white-space: pre;
}

.login-card {
  width: 800px;
  max-width: 100%;
  margin: 200px auto 0;
  overflow: hidden;
  border: 2px solid #ddd;
  border-radius: 0 0 20px 20px;
  background: #fff;
  color: #000;
  font-family: "Liberation Sans", Arial, sans-serif;
  font-size: 32px;
  font-weight: 400;
}

.login-title {
  margin: 0;
  padding-bottom: 2px;
  border-bottom: 4px solid #ddd;
  background: #e8e8e8;
  color: #333;
  font-size: 64px;
  line-height: 80px;
  text-align: center;
}

.login-body {
  display: grid;
  gap: 32px;
  padding: 48px 0;
}

.login-row {
  display: grid;
  grid-template-columns: 1fr 340px;
  gap: 10px;
  align-items: center;
  padding-right: 128px;
  text-align: right;
}

.login-input {
  height: 44px;
  padding: 0 4px;
  border: 2px solid #ddd;
  border-radius: 6px;
  outline: 0;
  background: #fff;
  font: inherit;
}

.login-input.is-focused {
  border-color: #6b98ea;
  background: linear-gradient(#222, #222) 2px 2px / 2px 34px no-repeat #fff;
  box-shadow: 0 0 0 3px #74a1f3, 0 0 0 5px #c3d7fa, inset 0 0 0 2px #c3d7fa;
}

.login-submit {
  justify-self: center;
  width: 176px;
  height: 86px;
  border: 2px solid #c4c4c4;
  background: #a32e29;
  color: #fff;
  font-size: 36px;
}

/* Dock */

.dock-area {
  position: relative;
  display: flex;
  align-items: flex-end;
  justify-content: center;
  height: 130px;
}

.rear-window {
  position: absolute;
  top: 0;
  right: 697px;
  left: 180px;
  display: flex;
  justify-content: space-between;
  height: 26px;
  padding: 0 402px 0 204px;
  border-right: 1px solid #333;
  border-left: 1px solid #333;
  background: #1c1c1d;
}

.rear-panel {
  width: 292px;
  height: 23px;
  margin-top: 3px;
  border-radius: 6px 6px 0 0;
  background: #252527;
}

.dock {
  position: relative;
  display: flex;
  align-items: center;
  height: 104px;
  margin: 0;
  padding: 0 4px;
  border: 2px solid #505256;
  border-bottom: 0;
  border-radius: 10px 10px 0 0;
  background: linear-gradient(90deg, #1e2230, #343a40 12%, #33343a 25%, #303137 60%, #2c2d33 72%, #191e2d 85%, #161c2c);
  list-style: none;
}

.dock-item {
  position: relative;
  width: 87px;
  height: 100px;
}

.dock-icon {
  width: 87px;
  height: 100px;
}

.is-running::after {
  position: absolute;
  bottom: 1px;
  left: 39px;
  width: 9px;
  height: 9px;
  border-radius: 50%;
  background: #a5a8b0;
  content: "";
}

.badge {
  position: absolute;
  top: 5px;
  left: 55px;
  width: 30px;
  height: 30px;
  border-radius: 50%;
  background: #e24b3e;
  font-size: 18px;
  font-weight: 400;
  line-height: 30px;
  text-align: center;
}

.dock-rule {
  width: 2px;
  height: 76px;
  margin: 0 19px;
  background: #5a5d66;
}

.dock-rule-short {
  height: 52px;
}
```
